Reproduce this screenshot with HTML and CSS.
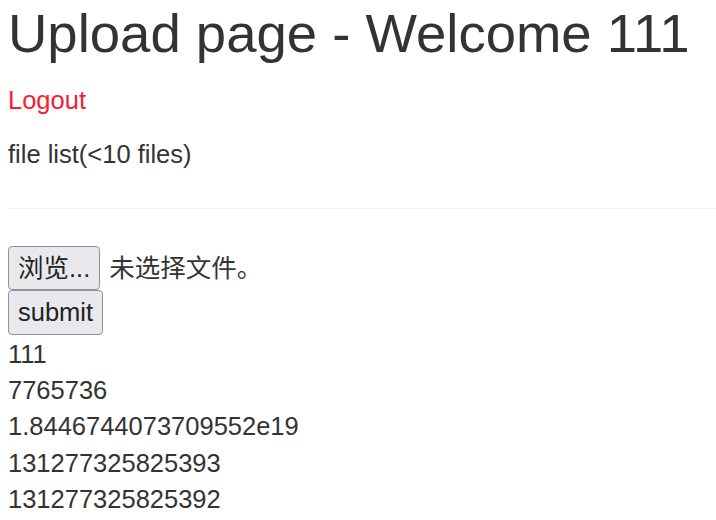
FILE: index.html
```html
<!DOCTYPE html>
<html lang="zh">
<head>
  <meta charset="UTF-8">
  <meta name="viewport" content="width=device-width, initial-scale=1.0">
  <title>Upload page</title>
  <link rel="stylesheet" href="styles.css">
</head>
<body>
  <div class="container">
    <h1>Upload page - Welcome 111</h1>
    <p><a href="#" class="logout">Logout</a></p>
    <p>file list(&lt;10 files)</p>
    <hr>
    <form class="upload-form">
      <div class="file-row">
        <button type="button" class="btn">浏览...</button>
        <span class="file-name">未选择文件。</span>
      </div>
      <button type="submit" class="btn btn-submit">submit</button>
    </form>
    <div class="file-list">
      <div>111</div>
      <div>7765736</div>
      <div>1.8446744073709552e19</div>
      <div>131277325825393</div>
      <div>131277325825392</div>
    </div>
  </div>
</body>
</html>
```

FILE: styles.css
```css
body {
  margin: 0;
  font-family: "Liberation Sans", Arial, "Noto Sans CJK SC", sans-serif;
  font-size: 25.5px;
  line-height: 36px;
  color: #333;
  background-color: #fff;
}
.container {
  padding-left: 8px;
}
h1 {
  margin: 4px 0 18px;
  font-size: 54.5px;
  font-weight: 400;
  line-height: 1.1;
}
p {
  margin: 0 0 18px;
}
.logout {
  color: #f5222d; /* red link */
  text-decoration: none;
}
hr {
  margin: 36px 0 37px;
  border: 0;
  border-top: 1px solid #eee;
}
.file-row {
  display: flex;
  align-items: center;
}
.btn {
  display: block;
  margin: 0;
  padding: 3px 9px;
  font-family: "Liberation Sans", Arial, "Noto Sans CJK SC", sans-serif;
  font-size: 25.5px;
  line-height: 36px;
  color: #222;
  background-color: #e9e9ed;
  border: 1px solid #8f8f9d;
  border-radius: 4px;
}
.btn-submit {
  padding-bottom: 4px;
}
.file-name {
  margin-left: 9px;
}
.file-list {
  padding-top: 1px;
}
.file-list div {
  line-height: 36.2px;
}
```
